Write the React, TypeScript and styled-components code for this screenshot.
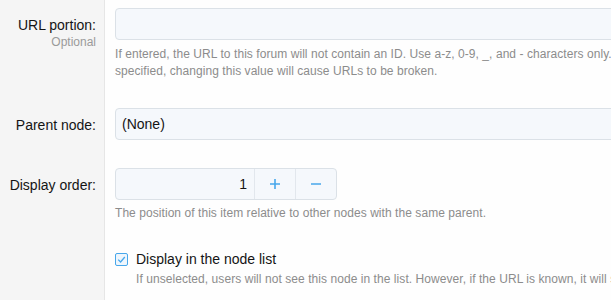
import styled, { createGlobalStyle } from "styled-components";

const GlobalStyle = createGlobalStyle`
  html, body {
    margin: 0;
    padding: 0;
    overflow: hidden;
    background: #fefefe;
  }
  body {
    font-family: "Liberation Sans", Arial, sans-serif;
    color: #141414;
  }
`;

const Form = styled.div`
  width: 820px;
  min-height: 100vh;
  padding-top: 8px;
  box-sizing: border-box;
  background: linear-gradient(
    to right,
    #f5f5f5 0,
    #f5f5f5 104px,
    #e6e6e6 104px,
    #e6e6e6 105px,
    #fefefe 105px
  );
`;

const FormRow = styled.div<{ $gap?: number }>`
  display: grid;
  grid-template-columns: 105px 1fr;
  margin-bottom: ${(p) => p.$gap ?? 28}px;
`;

const Label = styled.div`
  text-align: right;
  padding: 8px 9px 0 0;
`;

const LabelText = styled.div`
  font-size: 14px;
  line-height: 18px;
  color: #141414;
`;

const Hint = styled.div`
  font-size: 12px;
  line-height: 13px;
  margin-top: 2px;
  color: #9a9a9a;
`;

const Field = styled.div`
  padding-left: 10px;
`;

const TextBox = styled.div`
  height: 32px;
  box-sizing: border-box;
  border: 1px solid #dbe1e7;
  border-radius: 4px;
  background: #f5f8fc;
  padding: 0 6px;
  display: flex;
  align-items: center;
  font-size: 14px;
  color: #141414;
`;

const Explain = styled.div<{ $top?: number }>`
  font-size: 12px;
  line-height: 17px;
  letter-spacing: 0.06px;
  color: #8c8c8c;
  margin-top: ${(p) => p.$top ?? 5}px;
  white-space: nowrap;
`;

const Spinner = styled.div`
  display: flex;
  width: 222px;
  height: 32px;
  box-sizing: border-box;
  border: 1px solid #dbe1e7;
  border-radius: 4px;
  background: #f5f8fc;
  overflow: hidden;
`;

const SpinValue = styled.div`
  flex: 1;
  display: flex;
  align-items: center;
  justify-content: flex-end;
  padding-right: 7px;
  font-size: 14px;
`;

const SpinButton = styled.div`
  width: 40px;
  border-left: 1px solid #e2e7ed;
  display: flex;
  align-items: center;
  justify-content: center;
  color: #47a7eb;
`;

const CheckRow = styled.label`
  display: flex;
  align-items: center;
  gap: 8px;
  font-size: 14px;
  line-height: 18px;
  color: #141414;
`;

const CheckBox = styled.span`
  width: 13px;
  height: 13px;
  box-sizing: border-box;
  border: 1px solid #47a7eb;
  border-radius: 2px;
  background: #eef6fd;
  display: flex;
  align-items: center;
  justify-content: center;
`;

const CheckExplain = styled(Explain)`
  padding-left: 21px;
`;

const Plus = () => (
  <svg width="12" height="12" viewBox="0 0 12 12">
    <path d="M6 1v10M1 6h10" stroke="currentColor" strokeWidth="1.6" />
  </svg>
);

const Minus = () => (
  <svg width="12" height="12" viewBox="0 0 12 12">
    <path d="M1 6h10" stroke="currentColor" strokeWidth="1.6" />
  </svg>
);

const Tick = () => (
  <svg width="9" height="9" viewBox="0 0 9 9">
    <path d="M1.2 4.6 3.6 7 7.8 2" fill="none" stroke="#47a7eb" strokeWidth="1.3" />
  </svg>
);

export default function App() {
  return (
    <>
      <GlobalStyle />
      <Form>
        <FormRow>
          <Label>
            <LabelText>URL portion:</LabelText>
            <Hint>Optional</Hint>
          </Label>
          <Field>
            <TextBox />
            <Explain $top={6}>
              If entered, the URL to this forum will not contain an ID. Use a-z, 0-9, _, and - characters only.
              <br />
              specified, changing this value will cause URLs to be broken.
            </Explain>
          </Field>
        </FormRow>

        <FormRow>
          <Label>
            <LabelText>Parent node:</LabelText>
          </Label>
          <Field>
            <TextBox>(None)</TextBox>
          </Field>
        </FormRow>

        <FormRow>
          <Label>
            <LabelText>Display order:</LabelText>
          </Label>
          <Field>
            <Spinner>
              <SpinValue>1</SpinValue>
              <SpinButton>
                <Plus />
              </SpinButton>
              <SpinButton>
                <Minus />
              </SpinButton>
            </Spinner>
            <Explain>The position of this item relative to other nodes with the same parent.</Explain>
          </Field>
        </FormRow>

        <FormRow>
          <Label />
          <Field>
            <CheckRow>
              <CheckBox>
                <Tick />
              </CheckBox>
              Display in the node list
            </CheckRow>
            <CheckExplain $top={3}>
              If unselected, users will not see this node in the list. However, if the URL is known, it will still be accessible.
            </CheckExplain>
          </Field>
        </FormRow>
      </Form>
    </>
  );
}
